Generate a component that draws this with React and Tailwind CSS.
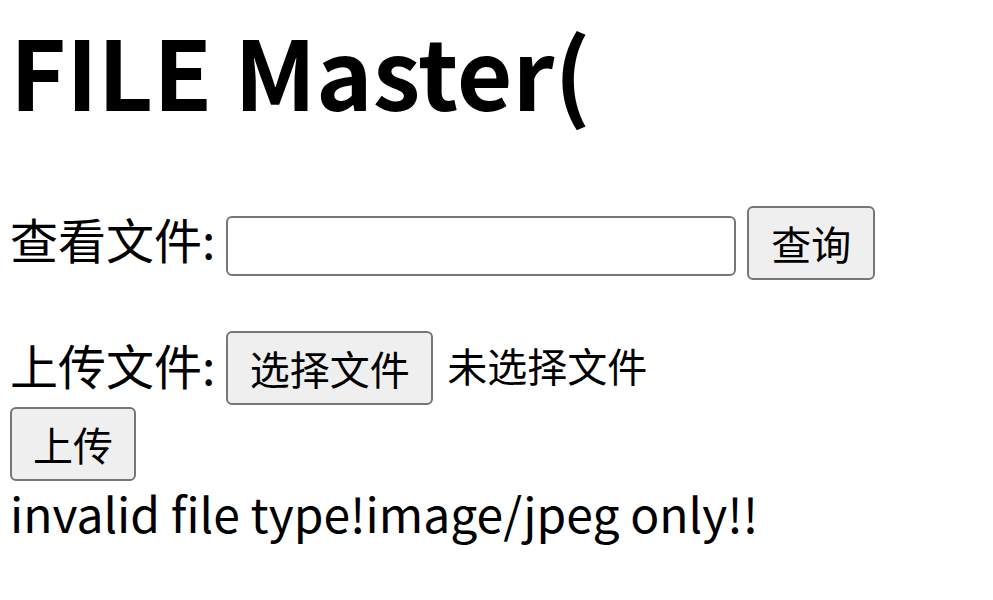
import React from "react";

export default function App() {
  return (
    <div className="bg-white text-black min-h-[600px] pl-[10px] font-['Noto_Sans_CJK_SC',sans-serif]">
      <h1 className="text-[96px] font-bold leading-none h-[96px] pt-[22px] box-content">FILE Master(</h1>
      <div className="h-[88px]" />
      <div className="flex items-center h-[74px] text-[48px] leading-none">
        <span className="-mt-[10px]">查看文件:</span>
        <input
          type="text"
          className="ml-[11px] mt-[6px] w-[510px] h-[60px] border-2 border-[#767676] rounded-[6px] bg-white"
        />
        <button className="ml-[11px] w-[128px] h-[74px] border-2 border-[#767676] rounded-[6px] bg-[#efefef] text-[40px] leading-none flex items-center justify-center">
          查询
        </button>
      </div>
      <div className="h-[51px]" />
      <div className="flex items-center h-[74px] text-[48px] leading-none">
        <span className="-mt-[8px]">上传文件:</span>
        <button className="ml-[11px] w-[207px] h-[74px] border-2 border-[#767676] rounded-[6px] bg-[#efefef] text-[40px] leading-none flex items-center justify-center">
          选择文件
        </button>
        <span className="ml-[14px] -mt-[6px] text-[40px]">未选择文件</span>
      </div>
      <div className="h-[2px]" />
      <button className="w-[126px] h-[74px] border-2 border-[#767676] rounded-[6px] bg-[#efefef] text-[40px] leading-none flex items-center justify-center">
        上传
      </button>
      <div className="text-[48px] leading-[70px] -mt-[4px]">invalid file type!image/jpeg only!!</div>
    </div>
  );
}
